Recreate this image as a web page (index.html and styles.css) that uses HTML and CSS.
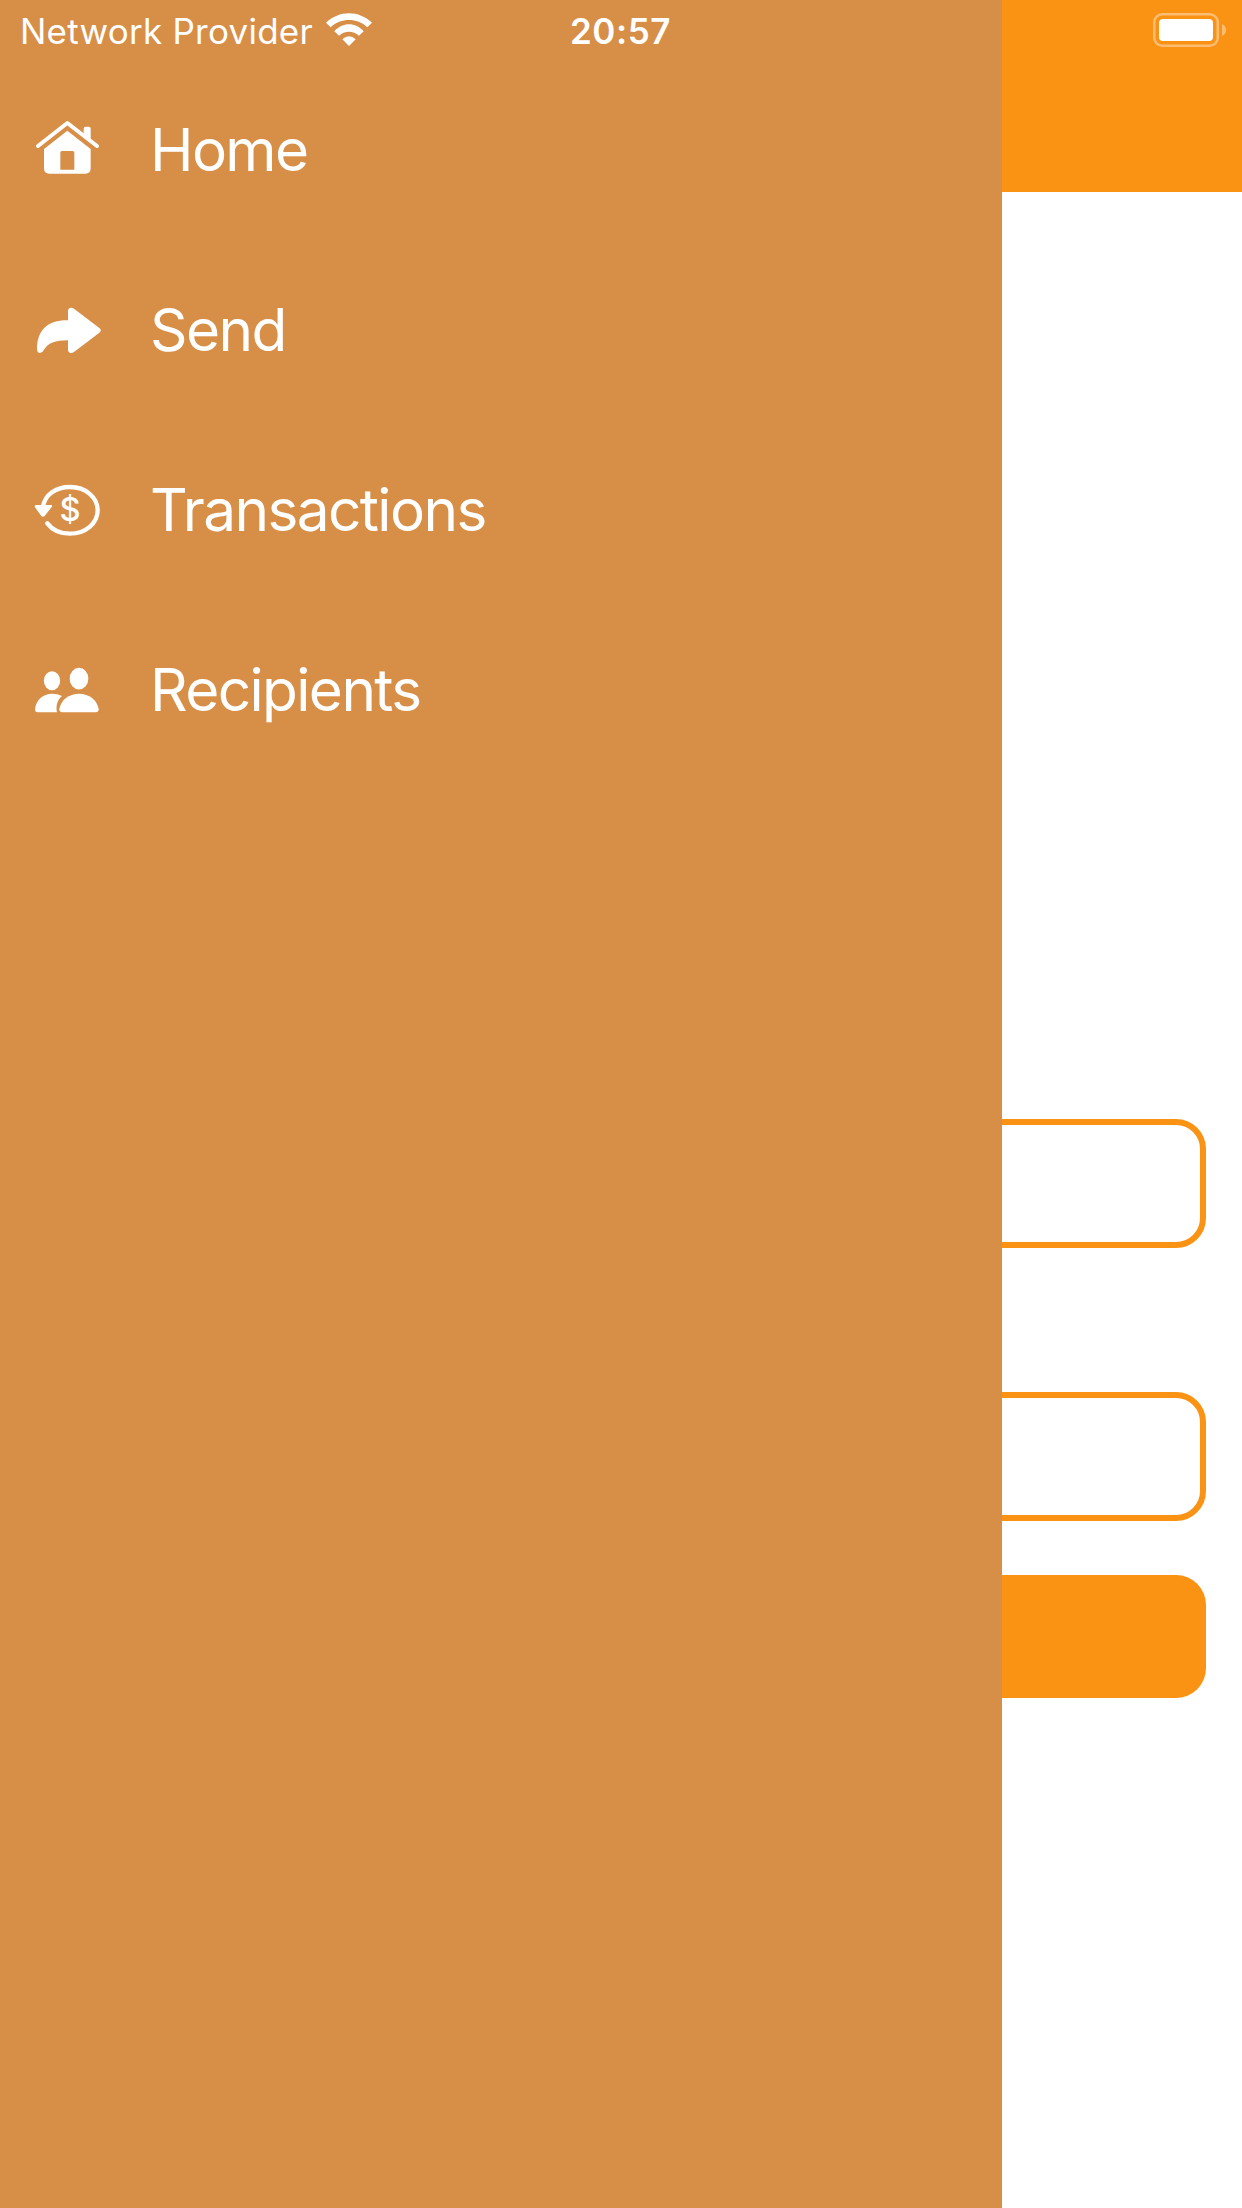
FILE: index.html
```html
<!DOCTYPE html>
<html lang="en">
<head>
    <meta charset="UTF-8">
    <meta name="viewport" content="width=device-width, initial-scale=1.0">
    <title>Menu</title>
    <link rel="stylesheet" href="styles.css">
</head>
<body>

<div class="screen">
    <header class="header"></header>
    <form class="form">
        <input type="text" class="field" aria-label="Email">
        <input type="password" class="field" aria-label="Password">
        <button type="button" class="submit" aria-label="Log in"></button>
    </form>
</div>

<nav class="drawer">
    <a class="item" href="#">
        <svg class="icon" viewBox="30 60 225 180">
            <path d="M54 138L142 69L231 138" fill="none" stroke="#fff" stroke-width="12" stroke-linecap="round" stroke-linejoin="round"/>
            <path d="M191 101V86Q191 80 197 80H206Q212 80 212 86V119Z"/>
            <path fill-rule="evenodd" d="M142 92L212 147V205Q212 221 196 221H88Q72 221 72 205V147ZM126 153Q121 153 121 158V209H163V158Q163 153 158 153Z"/>
        </svg>
        <span class="label">Home</span>
    </a>
    <a class="item" href="#">
        <svg class="icon" viewBox="30 30 225 180">
            <path d="M144 91V63Q144 54 153 53Q158 53 163 57L238 114Q247 121 238 128L163 185Q158 189 153 189Q144 188 144 179V151C105 151 84 159 71 181Q67 189 60 189Q51 188 51 176C52 119 84 90 144 91Z"/>
        </svg>
        <span class="label">Send</span>
    </a>
    <a class="item" href="#">
        <svg class="icon" viewBox="30 30 225 180">
            <path d="M69 110C75 74 108 51 150 51C197 51 233 82 233 121C233 160 197 191 150 191C122 191 97 180 82 160" fill="none" stroke="#fff" stroke-width="13" stroke-linecap="round"/>
            <path d="M48 105H93Q99 106 95 111L74 138Q69 143 64 138L45 112Q42 106 48 105Z"/>
            <text class="dollar" x="150" y="154">$</text>
        </svg>
        <span class="label">Transactions</span>
    </a>
    <a class="item" href="#">
        <svg class="icon" viewBox="30 30 225 180">
            <ellipse cx="96" cy="92" rx="24.500" ry="28.500"/>
            <ellipse cx="177" cy="86" rx="28" ry="32.500"/>
            <path d="M111 187H53Q45 187 45 178C48 150 69 131 96 131Q112 131 126 138C112 150 107 168 111 187Z"/>
            <path d="M127 187Q118 187 118 178C122 150 147 131 177 131C207 131 232 150 236 178Q236 187 227 187Z"/>
        </svg>
        <span class="label">Recipients</span>
    </a>
</nav>

<div class="status">
    <span class="carrier">Network Provider</span>
    <svg class="wifi" viewBox="975 36 144 105">
        <path d="M978 68C1017 30 1077 30 1116 68L1102 82C1071 53 1023 53 992 82Z"/>
        <path d="M1003 94C1028 66 1066 66 1091 94L1077 107C1060 91 1034 91 1017 107Z"/>
        <path d="M1027 118Q1047 100 1067 118L1047 138Z"/>
    </svg>
    <span class="time">20:57</span>
    <svg class="battery" viewBox="0 0 73 34">
        <rect x="1.250" y="1.250" width="63.500" height="31.500" rx="8" fill="none" stroke="#fff" stroke-opacity=".4" stroke-width="2.500"/>
        <rect x="6" y="6" width="54" height="22" rx="4"/>
        <path d="M69 11Q73 13 73 17Q73 21 69 23Z" fill-opacity=".4"/>
    </svg>
</div>

</body>
</html>
```

FILE: styles.css
```css
* {
    box-sizing: border-box;
}
body {
    margin: 0;
    height: 2208px;
    position: relative;
    overflow: hidden;
    background-color: #fff;
    color: #fff;
    font-family: Inter, "Liberation Sans", sans-serif;
}
svg {
    display: block;
    fill: #fff;
}
.header {
    height: 192px;
    background-color: #fa9214;
}
.form {
    display: flex;
    flex-direction: column;
    padding: 927px 36px 0;
}
.field {
    height: 129px;
    margin: 0;
    padding: 0 30px;
    border: 6px solid #fa9214;
    border-radius: 30px;
    background-color: #fff;
    font-size: 48px;
}
.field + .field {
    margin-top: 144px;
}
.submit {
    height: 123px;
    margin-top: 54px;
    border: none;
    border-radius: 30px;
    background-color: #fa9214;
}

/* side menu slides over the screen */
.drawer {
    position: absolute;
    top: 0;
    left: 0;
    width: 1002px;
    height: 100%;
    padding-top: 60px;
    background-color: #d78e47;
}
.item {
    display: flex;
    align-items: center;
    height: 180px;
    padding-left: 30px;
    color: #fff;
    font-size: 58.5px;
    letter-spacing: -1.6px;
    text-decoration: none;
}
.icon {
    width: 75px;
    height: 60px;
    margin-right: 45px;
}
.label {
    padding-bottom: 2px;
}
.dollar {
    font-size: 98px;
    font-weight: 500;
    letter-spacing: 0;
    text-anchor: middle;
}

.status {
    position: absolute;
    top: 0;
    left: 0;
    display: grid;
    grid-template-columns: auto auto 1fr auto;
    align-items: center;
    width: 100%;
    height: 60px;
    padding: 0 16px 0 20px;
    font-size: 35px;
}
.carrier {
    padding-top: 1px;
    letter-spacing: 0.25px;
}
.wifi {
    width: 48px;
    height: 35px;
    margin: 0 0 2px 12px;
}
.time {
    position: absolute;
    left: 0;
    right: 0;
    padding: 1px 1px 0 0;
    font-weight: 600;
    text-align: center;
    letter-spacing: 0.6px;
}
.battery {
    grid-column: 4;
    width: 73px;
    height: 34px;
}
```
